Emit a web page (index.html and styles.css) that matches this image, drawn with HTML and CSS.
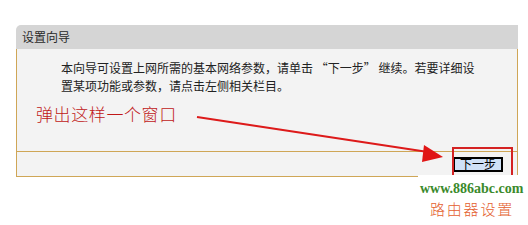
FILE: index.html
```html
<!DOCTYPE html>
<html lang="zh-CN">
<head>
<meta charset="utf-8">
<link rel="stylesheet" href="styles.css">
</head>
<body>
<div class="page">
  <div class="panel">
    <div class="panel-head">设置向导</div>
    <div class="panel-body">
      <p class="intro">本向导可设置上网所需的基本网络参数，请单击 “下一步” 继续。若要详细设<br>置某项功能或参数，请点击左侧相关栏目。</p>
      <p class="callout">弹出这样一个窗口</p>
    </div>
    <div class="panel-foot"><button class="btn">下一步</button></div>
  </div>
  <svg class="arrow" width="528" height="225" viewBox="0 0 528 225">
    <line x1="197" y1="117" x2="428" y2="152" stroke="#dd1a1a" stroke-width="2.2"/>
    <polygon points="443,157 424,145 422,162" fill="#e01515"/>
  </svg>
  <div class="highlight"></div>
  <div class="watermark">
    <div class="wm-url">www.886abc.com</div>
    <div class="wm-title">路由器设置</div>
  </div>
</div>
</body>
</html>
```
FILE: styles.css
```css
html, body {
  margin: 0;
  padding: 0;
  background: #ffffff;
}
.page {
  position: relative;
  width: 528px;
  height: 225px;
  overflow: hidden;
  padding-top: 25px;
  box-sizing: border-box;
  font-family: "Noto Sans CJK SC", "Liberation Sans", sans-serif;
}
.panel {
  margin-left: 16px;
  width: 502px;
}
.panel-head {
  height: 24px;
  background: #d5d5d5;
  border-top-left-radius: 5px;
  color: #2a2a2a;
  font-size: 12px;
  line-height: 24px;
  padding-left: 6px;
}
.panel-body {
  height: 103px;
  box-sizing: border-box;
  background: #f3f3f3;
  border-left: 1px solid #cfa656;
  border-right: 1px solid #cfa656;
  border-bottom: 1px solid #cfa656;
  padding: 10px 0 0 19px;
}
.intro {
  margin: 0;
  padding-left: 25px;
  font-size: 12px;
  line-height: 18px;
  color: #222;
}
.callout {
  margin: 9px 0 0 0;
  font-size: 17px;
  font-weight: 300;
  line-height: 20px;
  letter-spacing: 0.6px;
  color: #c01818;
}
.panel-foot {
  height: 25px;
  box-sizing: border-box;
  background: #f3f3f3;
  border-left: 1px solid #cfa656;
  border-right: 1px solid #cfa656;
  border-bottom: 1px solid #cfa656;
  display: flex;
  justify-content: flex-end;
  align-items: center;
  padding-right: 14px;
}
.btn {
  width: 50px;
  height: 15px;
  box-sizing: border-box;
  border: 2px solid #000;
  background: #cfe1f6;
  padding: 0;
  margin: 0;
  font-family: "Noto Sans CJK SC", sans-serif;
  font-size: 12px;
  line-height: 10px;
  color: #000;
}
.arrow {
  position: absolute;
  left: 0;
  top: 0;
}
.highlight {
  position: absolute;
  left: 452px;
  top: 147px;
  width: 61px;
  height: 40px;
  box-sizing: border-box;
  border: 2px solid #d42222;
}
.watermark {
  position: absolute;
  left: 418px;
  top: 175px;
  width: 110px;
  height: 50px;
  background: #ffffff;
}
.wm-url {
  margin: 6px 0 0 2px;
  font-family: "Liberation Serif", serif;
  font-weight: bold;
  font-size: 14px;
  line-height: 16px;
  color: #3b8a2c;
}
.wm-title {
  margin: 2px 0 0 12px;
  font-family: "Noto Sans CJK SC", sans-serif;
  font-size: 15px;
  font-weight: 300;
  line-height: 20px;
  letter-spacing: 1.8px;
  color: #e4602e;
}
```
